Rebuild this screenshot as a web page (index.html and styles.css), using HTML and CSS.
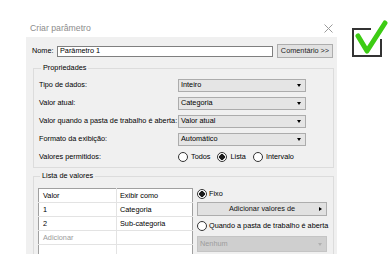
FILE: index.html
```html
<!DOCTYPE html>
<html lang="pt">
<head>
<meta charset="utf-8">
<link rel="stylesheet" href="styles.css">
</head>
<body>
<div class="page">
  <div class="dialog">
    <div class="titlebar">
      <span class="title">Criar parâmetro</span>
      <svg class="close" width="9" height="9" viewBox="0 0 9 9"><path d="M0.5 0.5 L8.5 8.5 M8.5 0.5 L0.5 8.5" stroke="#9a9a9a" stroke-width="1" fill="none"/></svg>
    </div>
    <div class="body">
      <div class="name-row">
        <span class="name-label">Nome:</span>
        <div class="input">Parâmetro 1</div>
        <div class="btn comment">Comentário &gt;&gt;</div>
      </div>
      <fieldset class="group props">
        <legend>Propriedades</legend>
        <div class="prop-grid">
          <span>Tipo de dados:</span>
          <div class="select">Inteiro</div>
          <span>Valor atual:</span>
          <div class="select">Categoria</div>
          <span>Valor quando a pasta de trabalho é aberta:</span>
          <div class="select">Valor atual</div>
          <span>Formato da exibição:</span>
          <div class="select">Automático</div>
          <span>Valores permitidos:</span>
          <div class="radios">
            <span class="opt"><span class="radio"></span>Todos</span>
            <span class="opt"><span class="radio on"></span>Lista</span>
            <span class="opt"><span class="radio"></span>Intervalo</span>
          </div>
        </div>
      </fieldset>
      <fieldset class="group list">
        <legend>Lista de valores</legend>
        <div class="list-wrap">
          <table class="values">
            <tr><td>Valor</td><td>Exibir como</td></tr>
            <tr><td>1</td><td>Categoria</td></tr>
            <tr><td>2</td><td>Sub-categoria</td></tr>
            <tr><td class="muted">Adicionar</td><td></td></tr>
            <tr><td></td><td></td></tr>
            <tr><td></td><td></td></tr>
          </table>
          <div class="side">
            <div class="opt side-opt fixo"><span class="radio on"></span>Fixo</div>
            <div class="btn add">Adicionar valores de<span class="tri"></span></div>
            <div class="opt side-opt when"><span class="radio"></span>Quando a pasta de trabalho é aberta</div>
            <div class="select disabled">Nenhum</div>
          </div>
        </div>
      </fieldset>
    </div>
  </div>
  <div class="check">
    <svg width="38" height="40" viewBox="0 0 38 40">
      <path d="M21 10 H3 V37 H31 V20" stroke="#333" stroke-width="2" fill="none"/>
      <path d="M8 17 L17 32 L35 4" stroke="#3dcc14" stroke-width="5" fill="none" stroke-linecap="round" stroke-linejoin="round"/>
    </svg>
  </div>
</div>
</body>
</html>
```
FILE: styles.css
```css
html, body {
  margin: 0;
  background: #fff;
}
body {
  font-family: "Liberation Sans", Arial, sans-serif;
  font-size: 7.3px;
  color: #000;
  line-height: 1;
}
.page {
  display: flex;
  align-items: flex-start;
}
.dialog {
  margin-left: 26px;
  width: 311px;
  height: 254px;
  display: flex;
  flex-direction: column;
  overflow: hidden;
  flex-shrink: 0;
}
.titlebar {
  flex-shrink: 0;
  height: 37px;
  box-sizing: border-box;
  padding: 19px 4px 0 4px;
  display: flex;
  align-items: center;
  justify-content: space-between;
  background: #fff;
}
.title {
  font-size: 8.7px;
  color: #8c8c8c;
}
.close {
  display: block;
}
.body {
  flex: 1 0 auto;
  background: #f0f0f0;
  padding: 7px 3px 0 6px;
}
.name-row {
  display: flex;
  align-items: center;
  height: 14px;
}
.name-label {
  width: 25px;
}
.input {
  width: 216px;
  height: 11px;
  box-sizing: border-box;
  border: 1px solid #7f7f7f;
  background: #fff;
  padding-left: 2px;
  display: flex;
  align-items: center;
}
.btn {
  box-sizing: border-box;
  border: 1px solid #adadad;
  background: #e1e1e1;
  display: flex;
  align-items: center;
  justify-content: center;
}
.comment {
  margin-left: 4px;
  width: 56px;
  height: 14px;
  color: #222;
}
.group {
  margin: 0 0 0 1px;
  border: 1px solid #dcdcdc;
  min-width: 0;
}
.group legend {
  padding: 0 2px;
  margin-left: 2px;
  line-height: 10px;
}
.props {
  margin-top: 5px;
  padding: 3px 5px 1px 5px;
}
.prop-grid {
  display: grid;
  grid-template-columns: 139px 128px;
  grid-auto-rows: 18px;
  align-items: center;
}
.prop-grid > span {
  white-space: nowrap;
}
.select {
  position: relative;
  height: 13px;
  box-sizing: border-box;
  border: 1px solid #acacac;
  background: #e5e5e5;
  padding-left: 2px;
  display: flex;
  align-items: center;
}
.select::after {
  content: "";
  position: absolute;
  right: 4px;
  top: 50%;
  margin-top: -1px;
  border-left: 2.5px solid transparent;
  border-right: 2.5px solid transparent;
  border-top: 3px solid #000;
}
.select.disabled {
  height: 16px;
  background: #cfcfcf;
  border-color: #c4c4c4;
  color: #9c9c9c;
}
.select.disabled::after {
  border-top-color: #b0b0b0;
}
.radios {
  display: flex;
  align-items: center;
  gap: 7px;
}
.opt {
  display: flex;
  align-items: center;
  gap: 3px;
  white-space: nowrap;
}
.radio {
  flex-shrink: 0;
  width: 10px;
  height: 10px;
  box-sizing: border-box;
  border: 1px solid #333;
  border-radius: 50%;
  background: #fff;
}
.radio.on {
  background: radial-gradient(circle, #1a1a1a 0 2.6px, #fff 3px);
}
.list {
  margin-top: 3px;
  padding: 7px 5px 0 4px;
}
.list-wrap {
  display: flex;
  gap: 4px;
  align-items: flex-start;
}
.values {
  width: 155px;
  border-collapse: collapse;
  border: 1px solid #a0a0a0;
  background: #fff;
  table-layout: fixed;
}
.values td {
  height: 13px;
  padding: 0 0 0 4px;
  border-top: 1px solid #e3e3e3;
  border-left: 1px solid #e3e3e3;
  white-space: nowrap;
}
.values td:first-child {
  width: 73px;
  border-left: none;
}
.values td:last-child {
  padding-left: 3px;
}
.values tr:first-child td {
  border-top: none;
}
.values .muted {
  color: #9a9a9a;
}
.side {
  width: 130px;
  display: flex;
  flex-direction: column;
}
.side-opt {
  gap: 2px;
}
.fixo {
  height: 11px;
}
.add {
  position: relative;
  margin-top: 3px;
  height: 14px;
  color: #111;
}
.tri {
  position: absolute;
  right: 4px;
  top: 50%;
  margin-top: -2.5px;
  border-top: 2.5px solid transparent;
  border-bottom: 2.5px solid transparent;
  border-left: 3px solid #000;
}
.when {
  height: 20px;
}
.check {
  margin-left: 13px;
  margin-top: 19px;
}
.check svg {
  display: block;
}
```
